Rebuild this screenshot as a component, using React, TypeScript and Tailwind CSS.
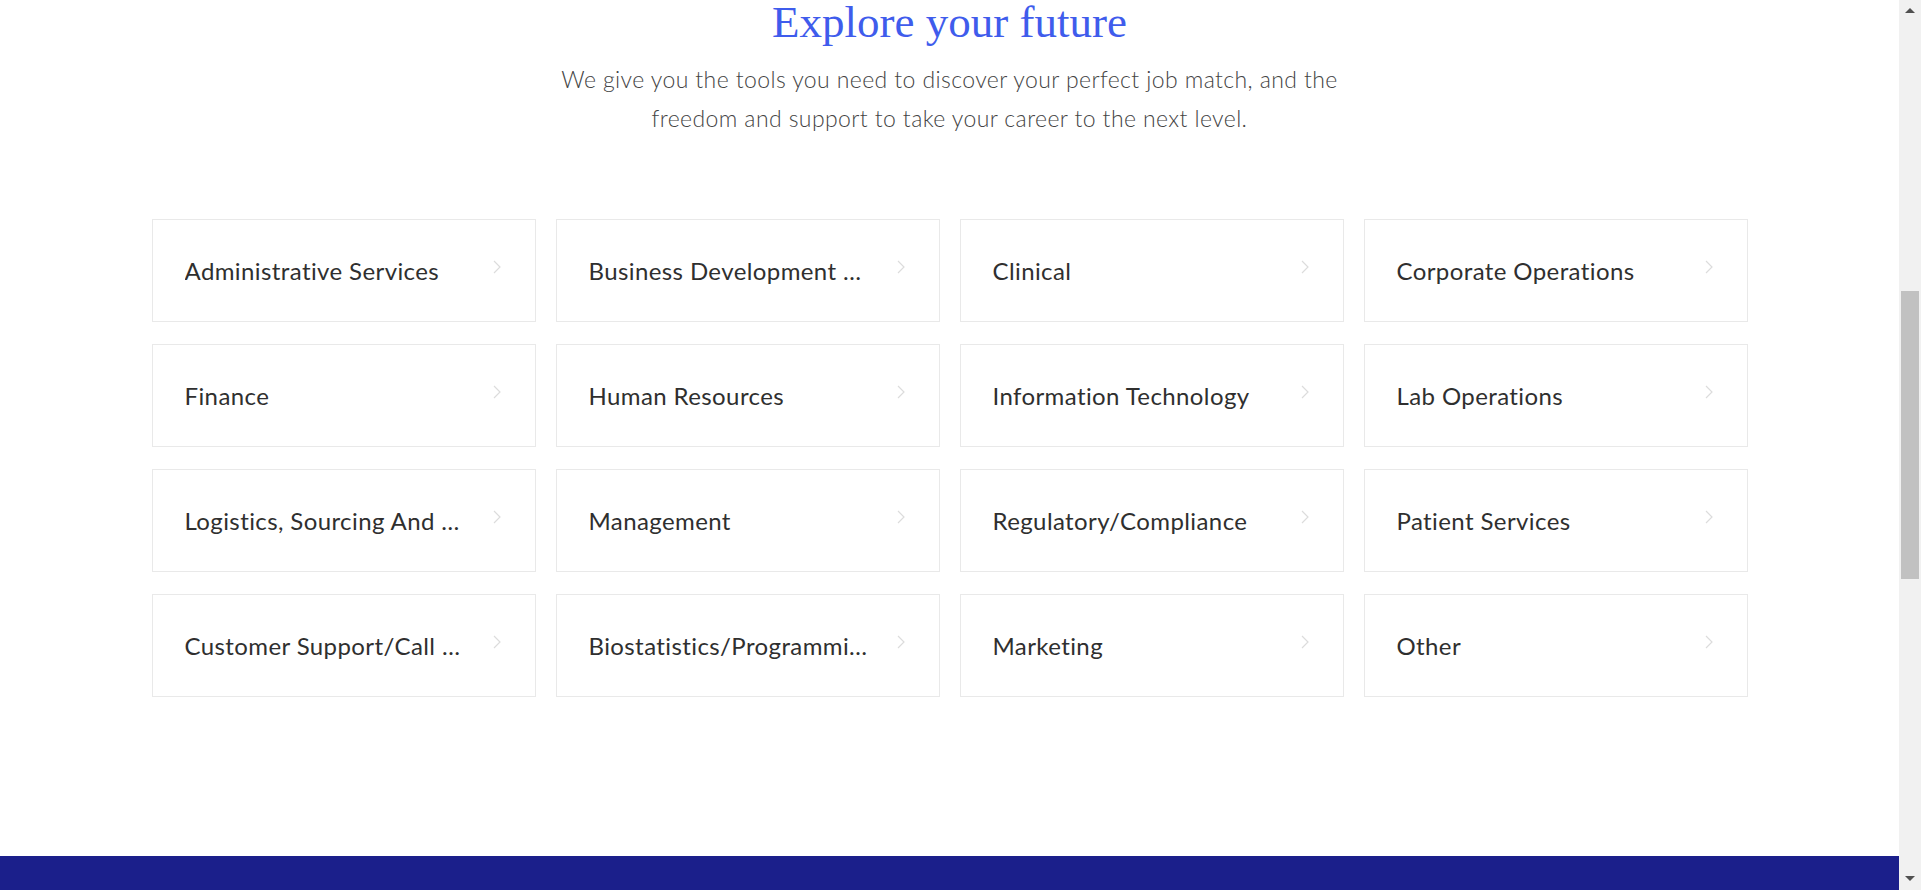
import React from 'react';

const categories = [
  'Administrative Services',
  'Business Development and Strategy',
  'Clinical',
  'Corporate Operations',
  'Finance',
  'Human Resources',
  'Information Technology',
  'Lab Operations',
  'Logistics, Sourcing And Procurement',
  'Management',
  'Regulatory/Compliance',
  'Patient Services',
  'Customer Support/Call Center',
  'Biostatistics/Programming',
  'Marketing',
  'Other',
];

function Chevron() {
  return (
    <svg width="8" height="14" viewBox="0 0 8 14" fill="none" className="shrink-0">
      <path d="M1 1l6 6-6 6" stroke="#dcdcdc" strokeWidth="1.2" />
    </svg>
  );
}

function CategoryCard({ label }: { label: string }) {
  return (
    <a
      href="#"
      className="flex h-[103px] items-center border border-[#e9e9e9] bg-white pl-8 pr-[34px]"
    >
      <span className="flex-1 truncate pr-6 text-[24px] tracking-[0.4px] text-[#2f2f2f]">{label}</span>
      <span className="-mt-2">
        <Chevron />
      </span>
    </a>
  );
}

function Scrollbar() {
  return (
    <div className="flex h-full w-[22px] shrink-0 flex-col items-center bg-[#f1f1f1]">
      <div className="mt-[8px] h-0 w-0 border-x-[5px] border-b-[5px] border-x-transparent border-b-[#505050]" />
      <div className="mt-[278px] h-[288px] w-[18px] bg-[#c1c1c1]" />
      <div className="mt-auto mb-[9px] h-0 w-0 border-x-[5px] border-t-[5px] border-x-transparent border-t-[#505050]" />
    </div>
  );
}

export default function App() {
  return (
    <div className="flex h-[890px] w-full overflow-hidden bg-white" style={{ fontFamily: 'Lato, "Noto Sans", sans-serif' }}>
      <div className="flex min-w-0 flex-1 flex-col">
        <section className="flex-1">
          <div className="text-center">
            <h2
              className="pt-[2px] text-[45px] leading-[40px] text-[#3f5cec]"
              style={{ fontFamily: '"Liberation Serif", "Times New Roman", serif' }}
            >
              Explore your future
            </h2>
            <p className="mx-auto mt-[18px] max-w-[840px] text-[23px] font-light leading-[39px] tracking-[0.4px] text-[#444444]">
              We give you the tools you need to discover your perfect job match, and the freedom and support to take
              your career to the next level.
            </p>
          </div>

          <div className="mx-auto mt-[81px] grid w-[1596px] grid-cols-4 gap-x-5 gap-y-[22px]">
            {categories.map((c) => (
              <CategoryCard key={c} label={c} />
            ))}
          </div>
        </section>
        <footer className="h-[34px] bg-[#1b1f8b]" />
      </div>
      <Scrollbar />
    </div>
  );
}
